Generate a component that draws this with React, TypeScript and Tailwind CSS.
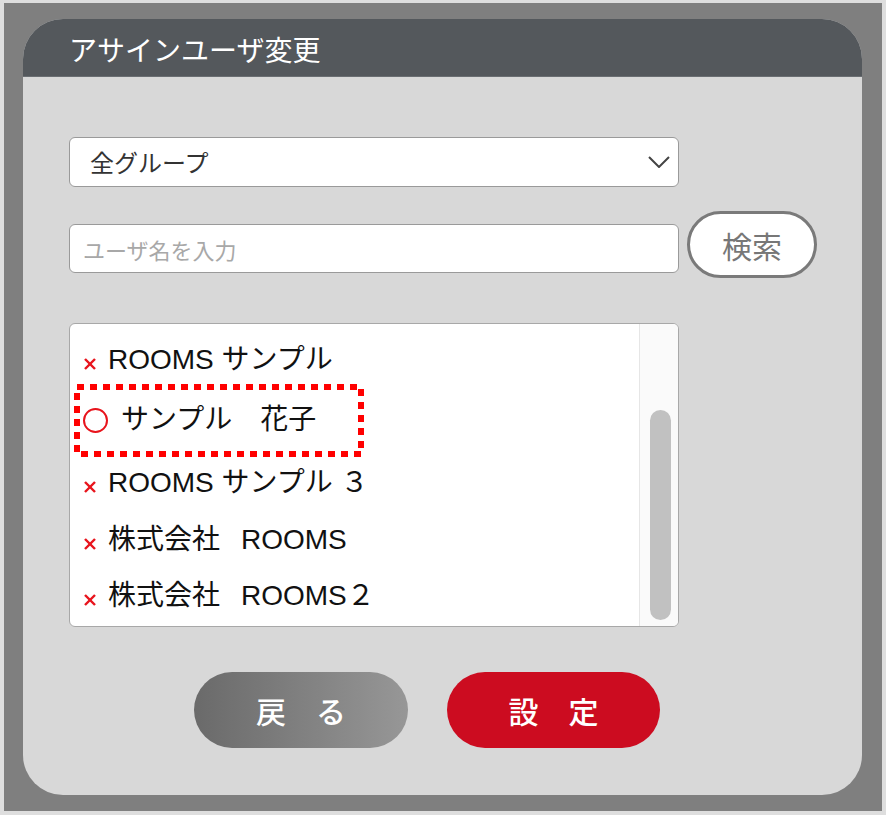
import React from "react";

const XMark = () => (
  <svg width="14" height="14" viewBox="0 0 14 14" className="shrink-0 mt-[8px]">
    <line x1="2" y1="2" x2="12" y2="12" stroke="#e8141c" strokeWidth="2.4" />
    <line x1="12" y1="2" x2="2" y2="12" stroke="#e8141c" strokeWidth="2.4" />
  </svg>
);

const font = "font-['Liberation_Sans','Noto_Sans_CJK_JP',sans-serif]";
const jp = "font-['Noto_Sans_CJK_JP',sans-serif]";

export default function App() {
  return (
    <div className="w-[886px] h-[815px] bg-[#dedede] pt-[3px] pl-[4px] pr-[4px] pb-[4px]">
      <div className="w-full h-full bg-[#7f7f7f] pt-[16px] pl-[19px]">
        <div className="w-[839px] h-[776px] rounded-[40px] bg-[#d8d8d8] overflow-hidden flex flex-col">
          <div className="h-[58px] bg-[#54585c] flex items-center pl-[46px] pt-[2px] border-b border-[#6a6e72]">
            <span className={`${jp} text-[28px] text-white leading-none`}>アサインユーザ変更</span>
          </div>
          <div className="flex flex-col pl-[46px] pt-[60px]">
            <div className="w-[610px] h-[50px] bg-white border border-[#9a9a9a] rounded-[6px] flex items-center justify-between pl-[20px] pr-[8px]">
              <span className={`${jp} text-[24px] text-[#333] leading-none`}>全グループ</span>
              <svg width="22" height="12" viewBox="0 0 22 12">
                <polyline points="1,1 11,11 21,1" fill="none" stroke="#444" strokeWidth="2" />
              </svg>
            </div>
            <div className="flex items-start mt-[24px]">
              <div className="w-[610px] h-[49px] mt-[13px] bg-white border border-[#9a9a9a] rounded-[6px] flex items-center pl-[13px]">
                <span className={`${jp} text-[22px] text-[#a8a8a8] leading-none`}>ユーザ名を入力</span>
              </div>
              <div className="ml-[8px] w-[130px] h-[67px] rounded-full bg-white border-[3px] border-[#7a7a7a] flex items-center justify-center">
                <span className={`${jp} text-[30px] text-[#777] leading-none`}>検索</span>
              </div>
            </div>
            <div className="mt-[45px] w-[610px] h-[304px] bg-white border border-[#a8a8a8] rounded-[6px] overflow-hidden flex">
              <div className={`flex-1 flex flex-col pt-[12px] ${font} text-[28px] text-[#111] leading-none`}>
                <div className="h-[48px] flex items-center pl-[13px] gap-[11px]">
                  <XMark />
                  <span>ROOMS サンプル</span>
                </div>
                <div className="h-[72px] flex items-center">
                  <div className="relative ml-[4px] w-[290px] h-[73px] flex items-center pl-[9px] gap-[13px]">
                    <svg className="absolute inset-0" width="290" height="73" viewBox="0 0 290 73">
                      <rect x="3" y="3" width="284" height="67" fill="none" stroke="#ff0000" strokeWidth="6" strokeDasharray="7 6" />
                    </svg>
                    <div className="w-[25px] h-[25px] rounded-full border-2 border-[#e8141c] shrink-0" />
                    <span>サンプル　花子</span>
                  </div>
                </div>
                <div className="h-[54px] flex items-center pl-[13px] gap-[11px]">
                  <XMark />
                  <span>ROOMS サンプル ３</span>
                </div>
                <div className="h-[60px] flex items-center pl-[13px] gap-[11px]">
                  <XMark />
                  <span>株式会社<span className="ml-[21px]">ROOMS</span></span>
                </div>
                <div className="h-[52px] flex items-center pl-[13px] gap-[11px]">
                  <XMark />
                  <span>株式会社<span className="ml-[21px]">ROOMS２</span></span>
                </div>
              </div>
              <div className="w-[39px] h-full bg-[#fafafa] border-l border-[#e6e6e6] pl-[10px] pt-[86px]">
                <div className="w-[21px] h-[210px] rounded-full bg-[#c1c1c1]" />
              </div>
            </div>
            <div className="flex mt-[45px] ml-[125px] gap-[39px]">
              <div className="w-[214px] h-[76px] rounded-full bg-gradient-to-r from-[#6a6a6a] to-[#979797] flex items-center justify-center">
                <span className={`${jp} text-[30px] text-white leading-none font-medium`}>戻　る</span>
              </div>
              <div className="w-[213px] h-[76px] rounded-full bg-[#cc0c20] flex items-center justify-center">
                <span className={`${jp} text-[30px] text-white leading-none font-medium`}>設　定</span>
              </div>
            </div>
          </div>
        </div>
      </div>
    </div>
  );
}
